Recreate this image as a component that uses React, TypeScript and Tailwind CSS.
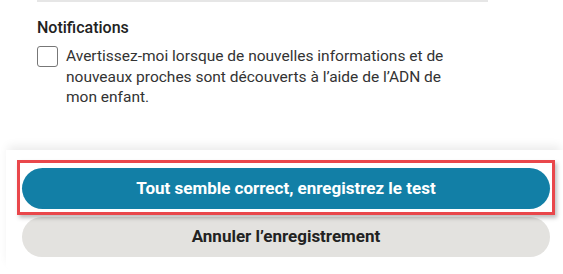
export default function App() {
  return (
    <div
      className="relative h-[274px] w-[563px] overflow-hidden bg-white text-[#333]"
      style={{ fontFamily: "Roboto, 'Liberation Sans', sans-serif" }}
    >
      <section className="ml-[37px] w-[451px] border-t-2 border-[#e6e6e6] pt-[16px]">
        <h3 className="text-[16px] font-medium leading-[20px] text-[#222]">Notifications</h3>
        <label className="mt-[8px] flex items-start gap-[8px]">
          <span className="mt-0 h-[21px] w-[21px] shrink-0 rounded-[3px] border border-[#777] bg-white" />
          <span className="w-[384px] text-[15.5px] leading-[20.5px] text-[#333]">
            Avertissez-moi lorsque de nouvelles informations et de nouveaux proches sont découverts à
            l’aide de l’ADN de mon enfant.
          </span>
        </label>
      </section>

      <div className="absolute left-[6px] right-0 top-[150px] bottom-[2px] rounded-bl-[8px] bg-white px-[16px] pt-[18px] shadow-[0_-6px_10px_-2px_rgba(0,0,0,0.08)]">
        <div className="flex w-[528px] flex-col gap-[8px]">
          <div className="relative">
            <span className="pointer-events-none absolute -left-[5px] -right-[5px] -top-[8px] -bottom-[6px] border-[3px] border-[#e9474b] shadow-[2px_3px_4px_rgba(0,0,0,0.25)]" />
            <button className="h-[41px] w-full rounded-full bg-[#127fa6] text-[17px] font-bold text-white">
              Tout semble correct, enregistrez le test
            </button>
          </div>
          <button className="h-[40px] w-full rounded-full bg-[#e3e2df] text-[17px] font-bold text-[#222]">
            Annuler l’enregistrement
          </button>
        </div>
      </div>
    </div>
  );
}
